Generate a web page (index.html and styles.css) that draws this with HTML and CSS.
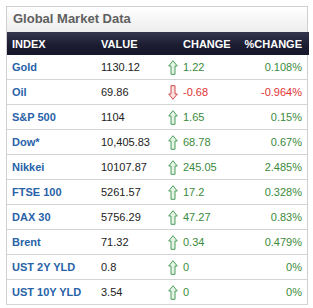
FILE: index.html
```html
<!DOCTYPE html>
<html>
<head>
<meta charset="utf-8">
<link rel="stylesheet" href="styles.css">
</head>
<body>
<div class="widget">
  <div class="title">Global Market Data</div>
  <div class="grid">
    <div class="row head">
      <div class="c-name">INDEX</div>
      <div class="c-val">VALUE</div>
      <div class="c-chg">CHANGE</div>
      <div class="c-pct">%CHANGE</div>
    </div>
    <div class="row up"><div class="c-name">Gold</div><div class="c-val">1130.12</div><div class="c-chg"><svg class="arr" viewBox="0 0 10 15"><path d="M5 0.7 L9.3 6 L7 6 L7 14.3 L3 14.3 L3 6 L0.7 6 Z"/></svg>1.22</div><div class="c-pct">0.108%</div></div>
    <div class="row down"><div class="c-name">Oil</div><div class="c-val">69.86</div><div class="c-chg"><svg class="arr" viewBox="0 0 10 15"><path d="M5 14.3 L9.3 9 L7 9 L7 0.7 L3 0.7 L3 9 L0.7 9 Z"/></svg>-0.68</div><div class="c-pct">-0.964%</div></div>
    <div class="row up"><div class="c-name">S&amp;P 500</div><div class="c-val">1104</div><div class="c-chg"><svg class="arr" viewBox="0 0 10 15"><path d="M5 0.7 L9.3 6 L7 6 L7 14.3 L3 14.3 L3 6 L0.7 6 Z"/></svg>1.65</div><div class="c-pct">0.15%</div></div>
    <div class="row up"><div class="c-name">Dow*</div><div class="c-val">10,405.83</div><div class="c-chg"><svg class="arr" viewBox="0 0 10 15"><path d="M5 0.7 L9.3 6 L7 6 L7 14.3 L3 14.3 L3 6 L0.7 6 Z"/></svg>68.78</div><div class="c-pct">0.67%</div></div>
    <div class="row up"><div class="c-name">Nikkei</div><div class="c-val">10107.87</div><div class="c-chg"><svg class="arr" viewBox="0 0 10 15"><path d="M5 0.7 L9.3 6 L7 6 L7 14.3 L3 14.3 L3 6 L0.7 6 Z"/></svg>245.05</div><div class="c-pct">2.485%</div></div>
    <div class="row up"><div class="c-name">FTSE 100</div><div class="c-val">5261.57</div><div class="c-chg"><svg class="arr" viewBox="0 0 10 15"><path d="M5 0.7 L9.3 6 L7 6 L7 14.3 L3 14.3 L3 6 L0.7 6 Z"/></svg>17.2</div><div class="c-pct">0.328%</div></div>
    <div class="row up"><div class="c-name">DAX 30</div><div class="c-val">5756.29</div><div class="c-chg"><svg class="arr" viewBox="0 0 10 15"><path d="M5 0.7 L9.3 6 L7 6 L7 14.3 L3 14.3 L3 6 L0.7 6 Z"/></svg>47.27</div><div class="c-pct">0.83%</div></div>
    <div class="row up"><div class="c-name">Brent</div><div class="c-val">71.32</div><div class="c-chg"><svg class="arr" viewBox="0 0 10 15"><path d="M5 0.7 L9.3 6 L7 6 L7 14.3 L3 14.3 L3 6 L0.7 6 Z"/></svg>0.34</div><div class="c-pct">0.479%</div></div>
    <div class="row up"><div class="c-name">UST 2Y YLD</div><div class="c-val">0.8</div><div class="c-chg"><svg class="arr" viewBox="0 0 10 15"><path d="M5 0.7 L9.3 6 L7 6 L7 14.3 L3 14.3 L3 6 L0.7 6 Z"/></svg>0</div><div class="c-pct">0%</div></div>
    <div class="row up"><div class="c-name">UST 10Y YLD</div><div class="c-val">3.54</div><div class="c-chg"><svg class="arr" viewBox="0 0 10 15"><path d="M5 0.7 L9.3 6 L7 6 L7 14.3 L3 14.3 L3 6 L0.7 6 Z"/></svg>0</div><div class="c-pct">0%</div></div>
  </div>
</div>
</body>
</html>
```
FILE: styles.css
```css
html, body {
  margin: 0;
  padding: 0;
  background: #fff;
}
body {
  padding: 6px 0 0 6px;
  font-family: "Liberation Sans", Arial, sans-serif;
  font-size: 11px;
}
.widget {
  width: 300px;
  border: 1px solid #cfcfcf;
  border-bottom: none;
}
.title {
  height: 25px;
  line-height: 24px;
  padding-left: 6px;
  font-size: 13px;
  font-weight: bold;
  color: #606060;
  background: linear-gradient(#ffffff, #ededed);
}
.row {
  display: grid;
  grid-template-columns: 94px 67px 1fr auto;
  align-items: center;
  height: 25px;
  border-bottom: 1px solid #d4d4d4;
  box-sizing: border-box;
}
.row.head {
  height: 23px;
  border-bottom: none;
  background: linear-gradient(#34354f, #1b1c30 60%, #16172a);
  color: #fff;
  font-weight: bold;
  margin-right: -2px;
}
.c-name {
  padding-left: 5px;
}
.row .c-name {
  font-weight: bold;
  color: #2862a8;
}
.row.head .c-name {
  color: #fff;
}
.c-val {
  color: #222;
}
.row.head .c-val {
  color: #fff;
}
.c-chg {
  display: flex;
  align-items: center;
}
.row.head .c-chg {
  padding-left: 15px;
}
.c-pct {
  text-align: right;
  padding-right: 5px;
}
.row.head .c-pct {
  padding-right: 7px;
}
.arr {
  width: 10px;
  height: 15px;
  margin-right: 5px;
}
.up .arr path {
  fill: #e4f4e4;
  stroke: #4d9d5d;
  stroke-width: 1;
}
.down .arr path {
  fill: #fbe2e2;
  stroke: #d04a4a;
  stroke-width: 1;
}
.up .c-chg, .up .c-pct {
  color: #3b8a3b;
}
.down .c-chg, .down .c-pct {
  color: #e03333;
}
```
